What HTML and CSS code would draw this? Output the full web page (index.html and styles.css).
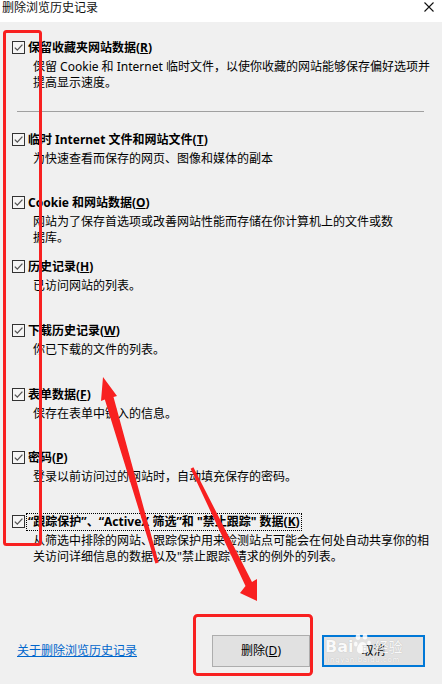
FILE: index.html
```html
<!doctype html>
<html lang="zh-CN">
<head>
<meta charset="utf-8">
<title>删除浏览历史记录</title>
<link rel="stylesheet" href="styles.css">
</head>
<body>
  <div class="titlebar">
    <span class="title">删除浏览历史记录</span>
    <svg class="close" width="10" height="10" viewBox="0 0 10 10"><path d="M0.5 0.5 L9.5 9.5 M9.5 0.5 L0.5 9.5" stroke="#111" stroke-width="1.1" fill="none"/></svg>
  </div>

  <div class="content">
    <div class="item first">
      <span class="box"><svg width="11" height="11" viewBox="0 0 11 11"><path d="M1.8 5.6 L4.3 8.1 L9.4 2.6" stroke="#555" stroke-width="1.3" fill="none"/></svg></span>
      <div class="text">
        <div class="label">保留收藏夹网站数据(<u>R</u>)</div>
        <div class="desc">保留 Cookie 和 Internet 临时文件，以使你收藏的网站能够保存偏好选项并<br>提高显示速度。</div>
      </div>
    </div>

    <hr class="sep">

    <div class="item">
      <span class="box"><svg width="11" height="11" viewBox="0 0 11 11"><path d="M1.8 5.6 L4.3 8.1 L9.4 2.6" stroke="#555" stroke-width="1.3" fill="none"/></svg></span>
      <div class="text">
        <div class="label">临时 Internet 文件和网站文件(<u>T</u>)</div>
        <div class="desc">为快速查看而保存的网页、图像和媒体的副本</div>
      </div>
    </div>

    <div class="item">
      <span class="box"><svg width="11" height="11" viewBox="0 0 11 11"><path d="M1.8 5.6 L4.3 8.1 L9.4 2.6" stroke="#555" stroke-width="1.3" fill="none"/></svg></span>
      <div class="text">
        <div class="label">Cookie 和网站数据(<u>O</u>)</div>
        <div class="desc">网站为了保存首选项或改善网站性能而存储在你计算机上的文件或数<br>据库。</div>
      </div>
    </div>

    <div class="item">
      <span class="box"><svg width="11" height="11" viewBox="0 0 11 11"><path d="M1.8 5.6 L4.3 8.1 L9.4 2.6" stroke="#555" stroke-width="1.3" fill="none"/></svg></span>
      <div class="text">
        <div class="label">历史记录(<u>H</u>)</div>
        <div class="desc">已访问网站的列表。</div>
      </div>
    </div>

    <div class="item">
      <span class="box"><svg width="11" height="11" viewBox="0 0 11 11"><path d="M1.8 5.6 L4.3 8.1 L9.4 2.6" stroke="#555" stroke-width="1.3" fill="none"/></svg></span>
      <div class="text">
        <div class="label">下载历史记录(<u>W</u>)</div>
        <div class="desc">你已下载的文件的列表。</div>
      </div>
    </div>

    <div class="item">
      <span class="box"><svg width="11" height="11" viewBox="0 0 11 11"><path d="M1.8 5.6 L4.3 8.1 L9.4 2.6" stroke="#555" stroke-width="1.3" fill="none"/></svg></span>
      <div class="text">
        <div class="label">表单数据(<u>F</u>)</div>
        <div class="desc">保存在表单中键入的信息。</div>
      </div>
    </div>

    <div class="item">
      <span class="box"><svg width="11" height="11" viewBox="0 0 11 11"><path d="M1.8 5.6 L4.3 8.1 L9.4 2.6" stroke="#555" stroke-width="1.3" fill="none"/></svg></span>
      <div class="text">
        <div class="label">密码(<u>P</u>)</div>
        <div class="desc">登录以前访问过的网站时，自动填充保存的密码。</div>
      </div>
    </div>

    <div class="item">
      <span class="box"><svg width="11" height="11" viewBox="0 0 11 11"><path d="M1.8 5.6 L4.3 8.1 L9.4 2.6" stroke="#555" stroke-width="1.3" fill="none"/></svg></span>
      <div class="text">
        <div class="label focused">“跟踪保护”、“ActiveX 筛选”和 "禁止跟踪" 数据(<u>K</u>)</div>
        <div class="desc">从筛选中排除的网站、跟踪保护用来检测站点可能会在何处自动共享你的相<br>关访问详细信息的数据以及"禁止跟踪"请求的例外的列表。</div>
      </div>
    </div>
  </div>

  <div class="actions">
    <a class="about" href="#">关于删除浏览历史记录</a>
    <div class="buttons">
      <button class="btn">删除(<u>D</u>)</button>
      <button class="btn default">取消</button>
    </div>
  </div>

  <!-- watermark -->
  <div class="wm">
    <div class="wm-top">
      <span class="wm-bai">Bai</span>
      <svg class="wm-paw" width="17" height="22" viewBox="0 0 17 22">
        <ellipse cx="4" cy="4" rx="2.3" ry="3" fill="#fff"/>
        <ellipse cx="11" cy="3.5" rx="2.3" ry="3" fill="#fff"/>
        <ellipse cx="1.8" cy="11" rx="1.8" ry="2.5" fill="#fff"/>
        <ellipse cx="15" cy="10" rx="1.8" ry="2.5" fill="#fff"/>
        <path d="M8.5 9 C5 9 3 14 3 17 C3 20 6 21 8.5 20 C11 21 14 20 14 17 C14 14 12 9 8.5 9 Z" fill="#fff"/>
      </svg>
      <span class="wm-jy">经验</span>
    </div>
    <div class="wm-url">jingyan.baidu.com</div>
  </div>

  <!-- red annotations -->
  <svg class="marks" width="442" height="684" viewBox="0 0 442 684">
    <rect x="4.5" y="31.5" width="36" height="513" rx="2" fill="none" stroke="#f82020" stroke-width="3"/>
    <rect x="194.5" y="615.5" width="117" height="59" rx="3" fill="none" stroke="#f82020" stroke-width="3"/>
    <polygon points="103,377 117,396 113.5,397 158.6,562.5 155.4,563.5 104.8,399.5 101,401" fill="#f82020"/>
    <polygon points="190.6,468.7 193.4,467.3 252,582 257,579 257,601 240,593 245.5,586" fill="#f82020"/>
  </svg>
</body>
</html>
```

FILE: styles.css
```css
* {
  box-sizing: border-box;
}

body {
  position: relative;
  width: 442px;
  height: 684px;
  margin: 0;
  overflow: hidden;
  background-color: #f0f0f0;
  font-family: "Noto Sans", "Noto Sans CJK SC", sans-serif;
  font-size: 12px;
  line-height: 16px;
  color: #000;
}

.titlebar {
  display: flex;
  justify-content: space-between;
  align-items: flex-start;
  height: 22px;
  padding: 0 8px 0 2px;
  background-color: #fff;
}

.title {
  line-height: 15px;
  color: #111;
}

.close {
  margin-top: 2px;
}

.content {
  padding: 18px 0 0 12px;
}

.item {
  display: flex;
  align-items: flex-start;
  height: 63.75px;
}

.item.first {
  height: 64px;
}

.box {
  flex: none;
  display: flex;
  align-items: center;
  justify-content: center;
  width: 13px;
  height: 13px;
  margin-top: 1px;
  border: 1px solid #333;
  background-color: #f5f5f5;
}

.text {
  margin-left: 3px;
  white-space: nowrap;
}

.label {
  font-weight: 700;
}

.label.focused {
  display: inline-block;
  margin-left: -1px;
  padding: 0 1px;
  outline: 1px dotted #000;
}

.desc {
  margin: 3px 0 0 5px;
}

.sep {
  width: 407px;
  height: 0;
  margin: 7px 0 19.5px 5px;
  border: none;
  border-top: 1px solid #a0a0a0;
}

.actions {
  display: flex;
  justify-content: space-between;
  align-items: center;
  margin-top: 57.25px;
  padding: 0 17px;
}

.about,
.about:visited {
  color: #0066cc;
  text-decoration: underline;
}

.buttons {
  display: flex;
  gap: 12px;
}

.btn {
  width: 98px;
  height: 32px;
  padding: 0;
  border: 1px solid #adadad;
  background-color: #e1e1e1;
  font: inherit;
  color: #000;
}

.btn.default {
  width: 103px;
  border: 2px solid #0078d7;
}

.wm {
  position: absolute;
  left: 325px;
  top: 632px;
  color: #fff;
  text-shadow: 0 0 1px rgba(0, 0, 0, 0.25);
  opacity: 0.85;
}

.wm-top {
  display: flex;
  align-items: flex-end;
  height: 24px;
}

.wm-bai {
  font-family: "DejaVu Sans", sans-serif;
  font-weight: 700;
  font-size: 16px;
  line-height: 18px;
}

.wm-paw {
  margin: 0 3px 1px 1px;
}

.wm-jy {
  font-size: 14px;
  line-height: 18px;
}

.wm-url {
  font-family: "DejaVu Sans", sans-serif;
  font-size: 7px;
  line-height: 8px;
  letter-spacing: 0.6px;
}

.marks {
  position: absolute;
  left: 0;
  top: 0;
  pointer-events: none;
}
```
